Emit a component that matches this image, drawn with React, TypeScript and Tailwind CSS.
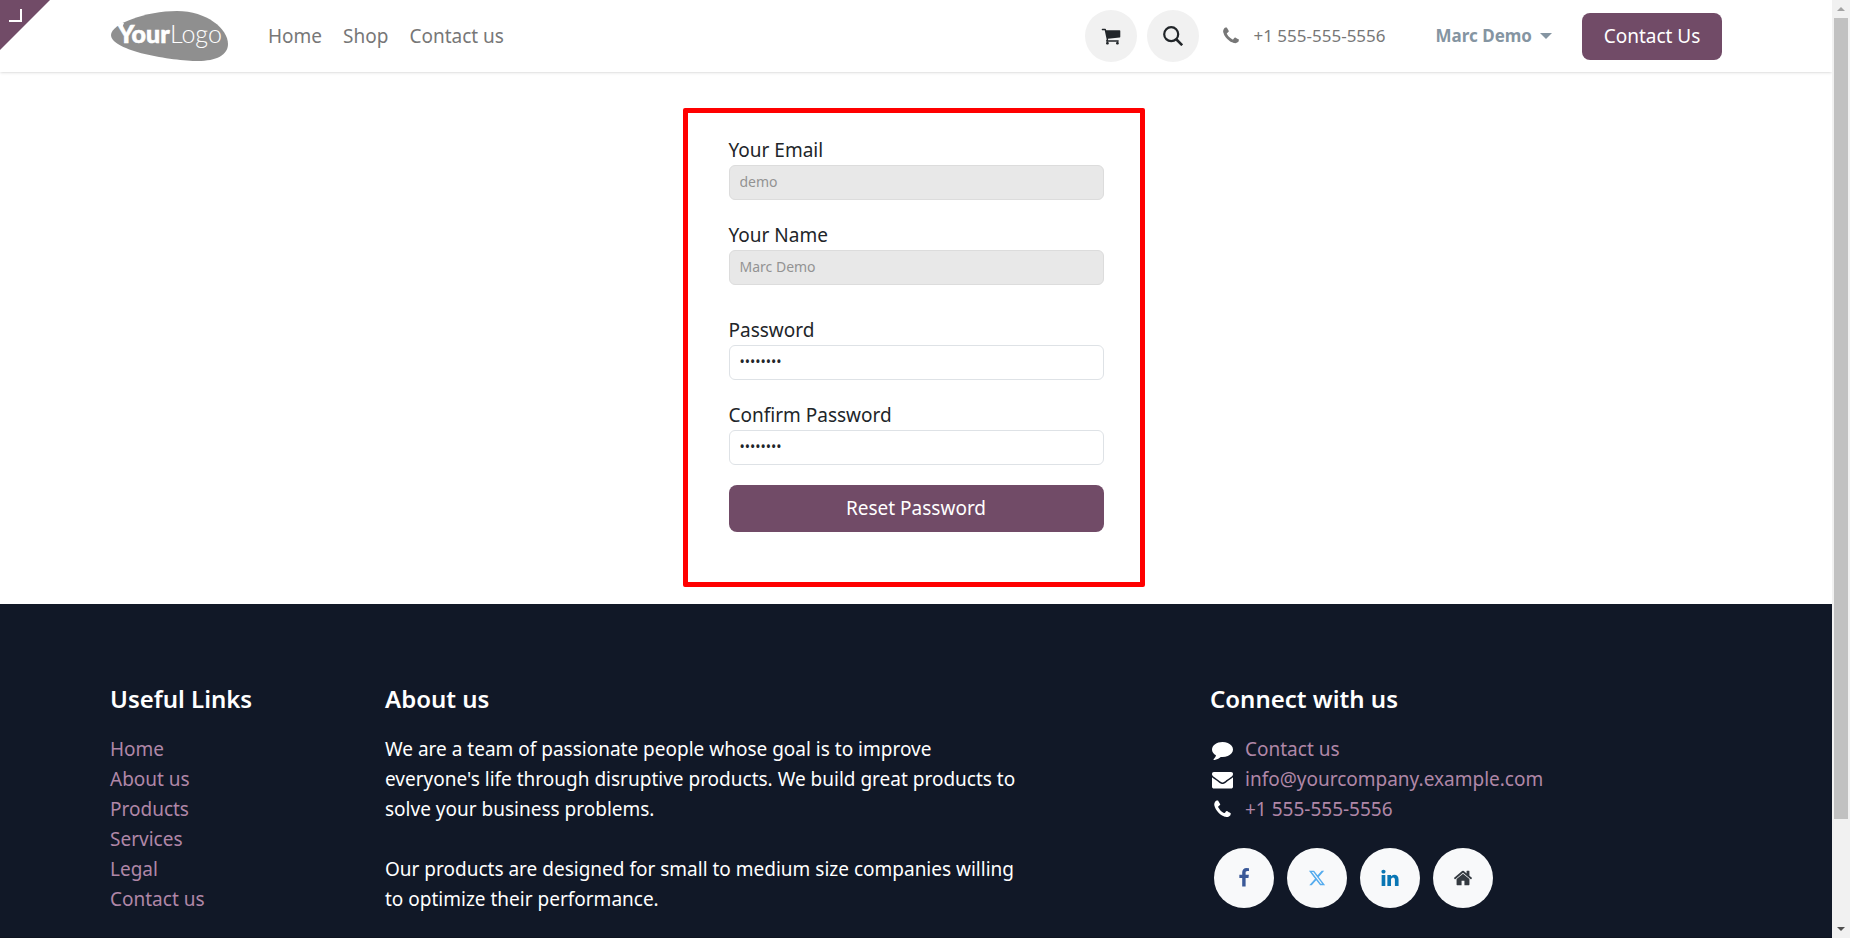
import type { ReactNode } from "react"
import { FaXTwitter } from "react-icons/fa6"

const paths = {
  cart: "M704 1536q0 52-38 90t-90 38-90-38-38-90 38-90 90-38 90 38 38 90zm896 0q0 52-38 90t-90 38-90-38-38-90 38-90 90-38 90 38 38 90zm128-1088v512q0 24-16.5 42.5t-40.5 21.5l-1044 122q13 60 13 70 0 16-24 64h920q26 0 45 19t19 45-19 45-45 19h-1024q-26 0-45-19t-19-45q0-11 8-31.5t16-36 21.5-40 15.5-29.5l-177-823h-204q-26 0-45-19t-19-45 19-45 45-19h256q16 0 28.5 6.5t19.5 15.5 13 24.5 8 26 5.5 29.5 4.5 26h1201q26 0 45 19t19 45z",
  phone: "M1600 1240q0 27-10 70.5t-21 68.5q-21 50-122 106-94 51-186 51-27 0-53-3.5t-57.5-12.5-47-14.5-55.5-20.5-49-18q-98-35-175-83-127-79-264-216t-216-264q-48-77-83-175-3-9-18-49t-20.5-55.5-14.5-47-12.5-57.5-3.5-53q0-92 51-186 56-101 106-122 25-11 68.5-21t70.5-10q14 0 21 3 18 6 53 76 11 19 30 54t35 63.5 31 53.5q3 4 17.5 25t21.5 35.5 7 28.5q0 20-28.5 50t-62 55-62 53-28.5 46q0 9 5 22.5t8.5 20.5 14 24 11.5 19q76 137 174 235t235 174q2 1 19 11.5t24 14 20.5 8.5 22.5 5q18 0 46-28.5t53-62 55-62 50-28.5q14 0 28.5 7t35.5 21.5 25 17.5q25 15 53.5 31t63.5 35 54 30q70 35 76 53 3 7 3 21z",
  comment: "M1792 896q0 174-120 321.5t-326 233-450 85.5q-70 0-145-8-198 175-460 242-49 14-114 22-17 2-30.5-9t-17.5-29v-1q-3-4-.5-12t2-10 4.5-9.5l6-9 7-8.5 8-9q7-8 31-34.5t34.5-38 31-39.5 32.5-51 27-59 26-76q-157-89-247.5-220t-90.5-281q0-130 71-248.5t191-204.5 286-136.5 348-50.5q244 0 450 85.5t326 233 120 321.5z",
  envelope: "M1792 710v794q0 66-47 113t-113 47h-1472q-66 0-113-47t-47-113v-794q44 49 101 87 362 246 497 345 57 42 92.5 65.5t94.5 48 110 24.5h2q51 0 110-24.5t94.5-48 92.5-65.5q170-123 498-345 57-39 100-87zm0-294q0 79-49 151t-122 123q-376 261-468 325-10 7-42.5 31t-54 38.5-52 32.5-57.5 27-50 9h-2q-23 0-50-9t-57.5-27-52-32.5-54-38.5-42.5-31q-91-64-262-182.5t-205-142.5q-62-42-117-115.5t-55-136.5q0-78 41.5-130t118.5-52h1472q65 0 112.5 47t47.5 113z",
  home: "M1472 992v480q0 26-19 45t-45 19h-384v-384h-256v384h-384q-26 0-45-19t-19-45v-480q0-1 .5-3t.5-3l575-474 575 474q1 2 1 6zm223-69l-62 74q-8 9-21 11h-3q-13 0-21-7l-692-577-692 577q-12 8-24 7-13-2-21-11l-62-74q-8-10-7-23.5t11-21.5l719-599q32-26 76-26t76 26l244 204v-195q0-14 9-23t23-9h192q14 0 23 9t9 23v408l219 182q10 8 11 21.5t-7 23.5z",
  facebook: "M1343 12v264h-157q-86 0-116 36t-30 108v189h293l-39 296h-254v759h-306v-759h-255v-296h255v-218q0-186 104-288.5t277-102.5q147 0 228 12z",
  linkedin: "M477 625v991h-330v-991h330zm21-306q1 73-50.5 122t-135.5 49h-2q-82 0-132-49t-50-122q0-74 51.5-122.5t134.5-48.5 133 48.5 51 122.5zm1166 729v568h-329v-530q0-105-40.5-164.5t-126.5-59.5q-63 0-105.5 34.5t-63.5 85.5q-11 30-11 81v553h-329q2-399 2-647t-1-296l-1-48h329v144h-2q20-32 41-56t56.5-52 87-43.5 114.5-15.5q171 0 275 113.5t104 332.5z",
}

function Icon({ name, className }: { name: keyof typeof paths; className: string }) {
  return (
    <svg viewBox="0 0 1792 1792" fill="currentColor" className={className} aria-hidden="true">
      <path d={paths[name]} />
    </svg>
  )
}

function Logo() {
  return (
    <svg viewBox="0 0 120 50" className="h-[50px] w-[120px]" role="img" aria-label="Your Logo">
      <path
        d="M1 24C1 13 36 0 67 0C97 0 118 18 118 33C118 44 106 50 88 50C62 50 1 40 1 24Z"
        fill="#8f8f8f"
      />
      <path d="M5 12H14L12 17L9 13L7 15Z" fill="#fff" />
      <g fill="#fff" fontFamily="Lato, sans-serif" fontSize="25">
        <text x="8" y="32" fontWeight="900" stroke="#fff" strokeWidth="0.6">Your</text>
        <text x="60" y="32" fontWeight="300">Logo</text>
      </g>
    </svg>
  )
}

function Header() {
  return (
    <header className="relative shadow-sm">
      <div className="mx-auto flex h-[72px] max-w-[1650px] items-center px-[19px]">
        <a href="#" className="mr-[38px]">
          <Logo />
        </a>
        <nav className="flex gap-[21px] text-[19px] text-[#777]">
          <a href="#">Home</a>
          <a href="#">Shop</a>
          <a href="#">Contact us</a>
        </nav>

        <div className="ml-auto flex items-center">
          <a
            href="#"
            aria-label="Cart"
            className="mr-[10px] flex size-[52px] items-center justify-center rounded-full bg-[#f1f1f1] text-[#212529]"
          >
            <Icon name="cart" className="size-5" />
          </a>
          <button
            type="button"
            aria-label="Search"
            className="mr-[22px] flex size-[52px] items-center justify-center rounded-full bg-[#f1f1f1] text-[#212529]"
          >
            <svg viewBox="0 0 20 20" fill="none" stroke="currentColor" strokeWidth="2.2" className="size-5">
              <circle cx="8.2" cy="8.2" r="7" />
              <path d="M13 13L19.2 19.2" strokeWidth="2.6" />
            </svg>
          </button>
          <a href="#" className="mr-[50px] flex items-center gap-3 text-[17px] text-[#777]">
            <Icon name="phone" className="size-5" />
            +1 555-555-5556
          </a>
          <button type="button" className="mr-[30px] flex items-center gap-2 text-[17px] font-bold text-[#8595a2]">
            Marc Demo
            <span className="border-x-[6px] border-t-[6px] border-x-transparent border-t-[#8595a2]" />
          </button>
          <button type="button" className="h-[47px] w-[140px] rounded-lg bg-[#714b67] text-[19px] text-white">
            Contact Us
          </button>
        </div>
      </div>

      {/* editor toggle in the corner */}
      <button
        type="button"
        aria-label="Open editor"
        className="absolute top-0 left-0 size-[50px] bg-[#714b67] [clip-path:polygon(0_0,100%_0,0_100%)]"
      >
        <span className="absolute top-[9px] left-[9px] size-[13px] border-r-2 border-b-2 border-white" />
      </button>
    </header>
  )
}

interface FieldProps {
  id: string
  label: string
  value: string
  type?: string
  disabled?: boolean
}

function Field({ id, label, value, type = "text", disabled }: FieldProps) {
  return (
    <div>
      <label htmlFor={id} className="block text-[19px] leading-[30px] text-[#212529]">
        {label}
      </label>
      <input
        id={id}
        type={type}
        defaultValue={value}
        disabled={disabled}
        className="block h-[35px] w-full rounded-md border border-[#dee2e6] bg-white px-[10px] pb-[2px] text-sm text-[#212529] disabled:border-[#dcdcdc] disabled:bg-[#e8e8e8] disabled:text-[#939393]"
      />
    </div>
  )
}

function ResetForm() {
  return (
    <form className="relative mx-auto w-[375px]" onSubmit={(e) => e.preventDefault()}>
      <div className="mb-[30px] space-y-5">
        <Field id="login" label="Your Email" value="demo" disabled />
        <Field id="name" label="Your Name" value="Marc Demo" disabled />
      </div>
      <div className="mb-5 space-y-5">
        <Field id="password" label="Password" value="demodemo" type="password" />
        <Field id="confirm" label="Confirm Password" value="demodemo" type="password" />
      </div>
      <button type="submit" className="h-[47px] w-full rounded-lg bg-[#714b67] text-[19px] text-white">
        Reset Password
      </button>
      {/* highlight frame */}
      <div className="pointer-events-none absolute -top-[27px] -right-[41px] -bottom-[55px] -left-[46px] rounded-xs border-[5px] border-[#ff0000]" />
    </form>
  )
}

function FooterTitle({ children }: { children: ReactNode }) {
  return <h5 className="mb-5 text-2xl leading-[30px] font-semibold text-white">{children}</h5>
}

const usefulLinks = ["Home", "About us", "Products", "Services", "Legal", "Contact us"]

const contacts: { icon: keyof typeof paths; text: string }[] = [
  { icon: "comment", text: "Contact us" },
  { icon: "envelope", text: "info@yourcompany.example.com" },
  { icon: "phone", text: "+1 555-555-5556" },
]

function Footer() {
  return (
    <footer className="bg-[#111827] text-[19px] leading-[30px] text-white">
      <div className="mx-auto grid max-w-[1650px] grid-cols-12 pt-20 pb-[23px]">
        <div className="col-span-2 px-[19px]">
          <FooterTitle>Useful Links</FooterTitle>
          <ul className="text-[#b087a7]">
            {usefulLinks.map((link) => (
              <li key={link}>
                <a href="#">{link}</a>
              </li>
            ))}
          </ul>
        </div>

        <div className="col-span-5 pr-3 pl-[19px]">
          <FooterTitle>About us</FooterTitle>
          <p className="mb-[30px]">
            We are a team of passionate people whose goal is to improve
            <br />
            everyone's life through disruptive products. We build great products to
            <br />
            solve your business problems.
          </p>
          <p>
            Our products are designed for small to medium size companies willing
            <br />
            to optimize their performance.
          </p>
        </div>

        <div className="col-span-4 col-start-9 px-[19px]">
          <FooterTitle>Connect with us</FooterTitle>
          <ul>
            {contacts.map(({ icon, text }) => (
              <li key={text} className="flex items-center">
                <span className="mr-[10px] flex w-[25px] justify-center">
                  <Icon name={icon} className="size-[21px]" />
                </span>
                <a href="#" className="text-[#b087a7]">{text}</a>
              </li>
            ))}
          </ul>
          <div className="mt-6 ml-1 flex gap-[13px] *:flex *:size-[60px] *:items-center *:justify-center *:rounded-full *:bg-[#f8f9fa]">
            <a href="#" aria-label="Facebook" className="text-[#3b5998]">
              <Icon name="facebook" className="size-5" />
            </a>
            <a href="#" aria-label="X" className="text-[#55acee]">
              <FaXTwitter className="size-[18px]" />
            </a>
            <a href="#" aria-label="LinkedIn" className="text-[#0976b4]">
              <Icon name="linkedin" className="size-5" />
            </a>
            <a href="#" aria-label="Home" className="text-[#343a40]">
              <Icon name="home" className="size-5" />
            </a>
          </div>
        </div>
      </div>
      <div className="h-20 bg-[#0e1420]" />
    </footer>
  )
}

function Scrollbar() {
  return (
    <div className="flex w-[18px] shrink-0 flex-col items-center bg-[#f1f1f1]" aria-hidden="true">
      <div className="flex h-[18px] items-center">
        <span className="border-x-4 border-b-4 border-x-transparent border-b-[#a3a3a3]" />
      </div>
      <div className="w-[14px] flex-[801] bg-[#c1c1c1]" />
      <div className="flex-[101]" />
      <div className="flex h-[18px] items-center">
        <span className="border-x-4 border-t-4 border-x-transparent border-t-[#505050]" />
      </div>
    </div>
  )
}

export default function App() {
  return (
    <div className="flex h-screen overflow-hidden bg-white font-['Noto_Sans',sans-serif]">
      <div className="min-w-0 flex-1 overflow-hidden">
        <Header />
        <main className="pt-[63px] pb-[72px]">
          <ResetForm />
        </main>
        <Footer />
      </div>
      <Scrollbar />
    </div>
  )
}
